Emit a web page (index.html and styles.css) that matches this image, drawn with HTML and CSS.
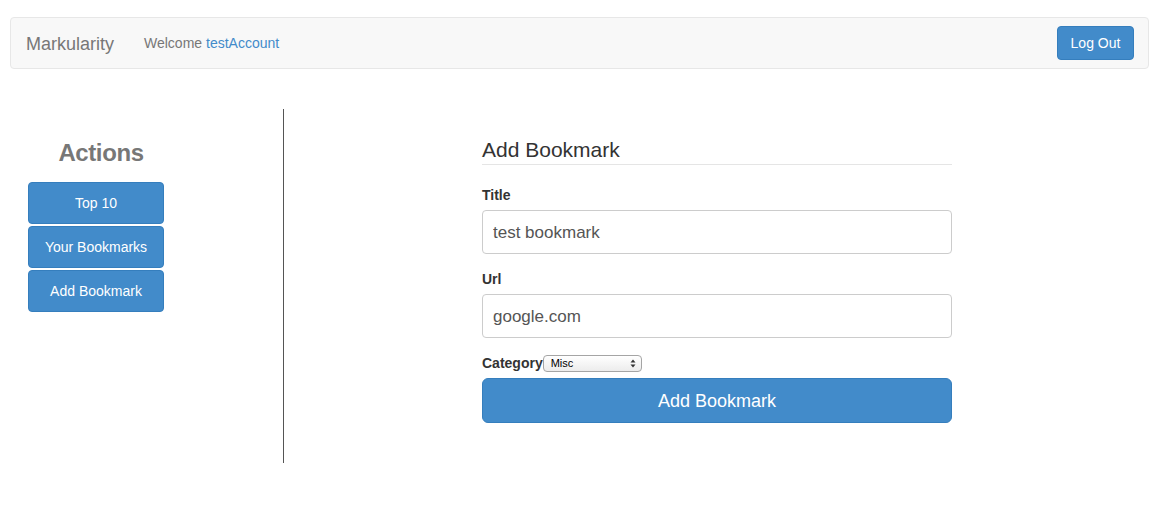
FILE: index.html
```html
<!DOCTYPE html>
<html>
<head>
<meta charset="utf-8">
<title>Markularity</title>
<link rel="stylesheet" href="styles.css">
</head>
<body>
<nav class="navbar">
  <a class="brand">Markularity</a>
  <p class="nav-text">Welcome <a class="nav-link">testAccount</a></p>
  <button class="btn btn-logout">Log Out</button>
</nav>
<div class="content">
  <aside class="sidebar">
    <h3 class="side-title">Actions</h3>
    <div class="side-buttons">
      <button class="btn side-btn">Top 10</button>
      <button class="btn side-btn">Your Bookmarks</button>
      <button class="btn side-btn">Add Bookmark</button>
    </div>
  </aside>
  <main class="main">
    <form class="form">
      <div class="legend">Add Bookmark</div>
      <div class="form-group">
        <label class="label">Title</label>
        <input class="input" type="text" value="test bookmark">
      </div>
      <div class="form-group">
        <label class="label">Url</label>
        <input class="input" type="text" value="google.com">
      </div>
      <div class="cat-row">
        <label class="label label-inline">Category</label>
        <span class="select-wrap">
          <select class="select"><option>Misc</option></select>
          <svg class="select-arrows" width="6" height="9" viewBox="0 0 6 9"><path d="M0.5 3.5 L3 0.5 L5.5 3.5 Z M0.5 5.5 L3 8.5 L5.5 5.5 Z" fill="#333"/></svg>
        </span>
      </div>
      <button class="btn btn-submit" type="button">Add Bookmark</button>
    </form>
  </main>
</div>
</body>
</html>
```
FILE: styles.css
```css
* { box-sizing: border-box; }
html, body { margin: 0; padding: 0; background: #fff; }
body {
  font-family: "Liberation Sans", Arial, sans-serif;
  font-size: 14px;
  line-height: 1.428571;
  color: #333;
}
.navbar {
  margin: 17px 11px 0 10px;
  height: 52px;
  background: #f8f8f8;
  border: 1px solid #e7e7e7;
  border-radius: 4px;
  display: flex;
  align-items: center;
}
.brand {
  font-size: 18px;
  line-height: 20px;
  color: #777;
  padding: 1px 15px 0;
}
.nav-text {
  margin: 0 0 0 15px;
  padding-top: 1px;
  color: #777;
  flex: 1;
}
.nav-link { color: #428bca; }
.btn {
  font-family: "Liberation Sans", Arial, sans-serif;
  background: #428bca;
  border: 1px solid #357ebd;
  color: #fff;
  border-radius: 4px;
  font-size: 14px;
  cursor: pointer;
}
.btn-logout {
  width: 77px;
  height: 34px;
  margin-right: 14px;
  padding: 0;
}
.content {
  display: flex;
  margin-top: 40px;
}
.sidebar {
  width: 284px;
  height: 354px;
  border-right: 1px solid #555;
  padding-left: 28px;
}
.side-title {
  width: 146px;
  text-align: center;
  margin: 31px 0 16px;
  font-size: 24px;
  line-height: 26px;
  font-weight: bold;
  color: #777;
  letter-spacing: -0.4px;
}
.side-buttons {
  display: flex;
  flex-direction: column;
  gap: 2px;
}
.side-btn {
  width: 136px;
  height: 42px;
  padding: 0;
}
.main {
  flex: 1;
  padding-left: 198px;
}
.form { width: 470px; margin-top: 25px; }
.legend {
  font-size: 21px;
  line-height: 29px;
  padding-top: 1px;
  color: #333;
  border-bottom: 1px solid #e5e5e5;
  margin-bottom: 20px;
}
.form-group { margin-bottom: 15px; }
.label {
  display: block;
  font-weight: bold;
  line-height: 20px;
  margin-bottom: 5px;
}
.input {
  display: block;
  width: 100%;
  height: 44px;
  padding: 2px 10px 0;
  font-family: "Liberation Sans", Arial, sans-serif;
  font-size: 17px;
  color: #555;
  border: 1px solid #ccc;
  border-radius: 4px;
  background: #fff;
}
.cat-row {
  display: flex;
  align-items: center;
  height: 20px;
  margin-top: 0;
  margin-bottom: 5px;
}
.label-inline { display: inline-block; margin: 0; }
.select-wrap {
  position: relative;
  display: inline-block;
  width: 99px;
  height: 17px;
}
.select {
  -webkit-appearance: none;
  appearance: none;
  width: 99px;
  height: 17px;
  padding: 0 0 0 7px;
  font-family: "Liberation Sans", Arial, sans-serif;
  font-size: 11px;
  line-height: 15px;
  color: #000;
  border: 1px solid #a5a5a5;
  border-radius: 4px;
  background: linear-gradient(#ffffff, #ececec);
  display: block;
}
.select-arrows {
  position: absolute;
  right: 6px;
  top: 4px;
  pointer-events: none;
}
.btn-submit {
  display: block;
  width: 470px;
  height: 45px;
  font-size: 18px;
  border-radius: 6px;
  padding: 2px 0 0;
}
```
